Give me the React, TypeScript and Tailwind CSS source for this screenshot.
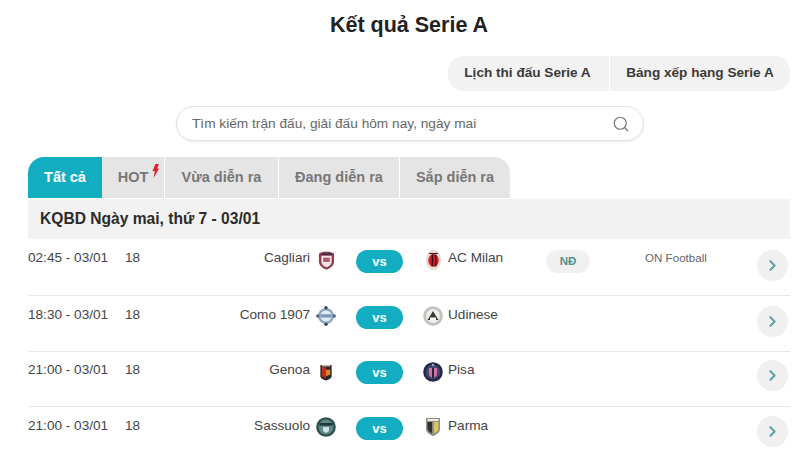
import React from 'react';
import { Search, ChevronRight } from 'lucide-react';

function Cagliari() {
  return (
    <svg viewBox="0 0 18 20" className="h-[19px] w-[17px] blur-[0.3px]">
      <path d="M1 2.5 L5.5 0.8 H12.5 L17 2.5 L17 11 C17 15.5 12.5 18.6 9 19.6 C5.5 18.6 1 15.5 1 11 Z" fill="#8f3a4f" />
      <path d="M3.5 5 H14.5 V11 C14.5 14 11.5 16.4 9 17.2 C6.5 16.4 3.5 14 3.5 11 Z" fill="#f3e3e6" />
      <rect x="5.5" y="7" width="7" height="4.5" fill="#b9566b" />
      <rect x="3.5" y="2.3" width="11" height="1.8" fill="#2c3550" />
    </svg>
  );
}

function Milan() {
  return (
    <svg viewBox="0 0 16 22" className="h-[20px] w-[15px] blur-[0.3px]">
      <ellipse cx="8" cy="11" rx="7.5" ry="10.5" fill="#f1e6e0" stroke="#c9a9a0" strokeWidth="0.6" />
      <ellipse cx="8" cy="11.5" rx="5.8" ry="7" fill="#d81f26" />
      <rect x="6" y="5" width="1.6" height="13" fill="#2a1214" />
      <rect x="9.6" y="5" width="1.6" height="13" fill="#2a1214" />
      <rect x="3" y="3.2" width="10" height="1.2" fill="#3d2022" />
    </svg>
  );
}

function Como() {
  return (
    <svg viewBox="0 0 20 20" className="h-[20px] w-[20px] blur-[0.3px]">
      <circle cx="10" cy="10" r="8" fill="#8fa9c4" />
      <circle cx="10" cy="10" r="5.6" fill="#e4ebf2" />
      <rect x="4.5" y="8.2" width="11" height="3.4" fill="#7f9cb9" />
      <circle cx="10" cy="1.8" r="1.7" fill="#33465c" />
      <circle cx="10" cy="18.2" r="1.7" fill="#33465c" />
      <circle cx="1.8" cy="10" r="1.7" fill="#4b6380" />
      <circle cx="18.2" cy="10" r="1.7" fill="#4b6380" />
    </svg>
  );
}

function Udinese() {
  return (
    <svg viewBox="0 0 20 20" className="h-[20px] w-[20px] blur-[0.3px]">
      <circle cx="10" cy="10" r="9.8" fill="#c4c2bd" />
      <circle cx="10" cy="10" r="7" fill="#eeece8" />
      <path d="M4.5 14 L10 5 L15.5 14 Z" fill="#3a3a3a" />
      <rect x="7" y="11.5" width="6" height="3" fill="#faf9f6" />
    </svg>
  );
}

function Genoa() {
  return (
    <svg viewBox="0 0 14 18" className="h-[17px] w-[14px] blur-[0.3px]">
      <path d="M1 1 H13 V13 C13 15.5 9 17 7 17.5 C5 17 1 15.5 1 13 Z" fill="#2d2a26" />
      <path d="M2.5 3.5 H7 V15 L2.5 13 Z" fill="#c7281f" />
      <path d="M7 6 H11.5 V11 L7 13 Z" fill="#d9852a" />
      <rect x="2.5" y="1" width="9" height="1.6" fill="#c7b9a8" />
    </svg>
  );
}

function Pisa() {
  return (
    <svg viewBox="0 0 20 20" className="h-[20px] w-[20px] blur-[0.3px]">
      <circle cx="10" cy="10" r="9.8" fill="#252a4a" />
      <circle cx="10" cy="10" r="7.2" fill="#43486e" />
      <path d="M6 6 H14 V12 C14 14 11.5 15.5 10 16 C8.5 15.5 6 14 6 12 Z" fill="#d9709f" />
      <rect x="9" y="6" width="2" height="10" fill="#1f2340" />
      <circle cx="10" cy="3" r="0.9" fill="#d6d8e6" />
    </svg>
  );
}

function Sassuolo() {
  return (
    <svg viewBox="0 0 20 20" className="h-[20px] w-[20px] blur-[0.3px]">
      <circle cx="10" cy="10" r="9.8" fill="#33504f" />
      <circle cx="10" cy="10" r="7.4" fill="#5f8a8c" />
      <rect x="3.5" y="6" width="13" height="2.6" fill="#20373a" />
      <path d="M7 10 H13 V14 L10 16 L7 14 Z" fill="#cfe0e0" />
    </svg>
  );
}

function Parma() {
  return (
    <svg viewBox="0 0 16 20" className="h-[20px] w-[16px] blur-[0.3px]">
      <path d="M1 1 H15 V12 C15 16 10 18.5 8 19 C6 18.5 1 16 1 12 Z" fill="#8f8f86" />
      <path d="M2.5 5 H7 V16.4 C5 15.4 2.5 14 2.5 11.5 Z" fill="#2f2f2f" />
      <path d="M9 5 H13.5 V11.5 C13.5 14 11 15.4 9 16.4 Z" fill="#d9c860" />
      <rect x="2.5" y="2" width="11" height="2" fill="#efeee6" />
    </svg>
  );
}

function Hot() {
  return (
    <svg viewBox="0 0 8 14" className="absolute -top-[3px] -right-[11px] h-[14px] w-[8px]">
      <path d="M4.5 0 H8 L6.2 4.6 H8 L2.6 14 L3.8 7 H1.4 Z" fill="#e0222a" />
    </svg>
  );
}

type Match = {
  time: string;
  home: string;
  away: string;
  homeLogo: React.ReactNode;
  awayLogo: React.ReactNode;
  nd?: boolean;
  channel?: string;
  row: string;
  text: string;
  logo: string;
  pill: string;
  arrow: string;
};

const matches: Match[] = [
  { time: '02:45 - 03/01', home: 'Cagliari', away: 'AC Milan', homeLogo: <Cagliari />, awayLogo: <Milan />, nd: true, channel: 'ON Football', row: 'h-[57px]', text: 'pt-[11px]', logo: 'mt-0', pill: 'mt-[11px]', arrow: 'mt-[11px]' },
  { time: '18:30 - 03/01', home: 'Como 1907', away: 'Udinese', homeLogo: <Como />, awayLogo: <Udinese />, row: 'h-[56px]', text: 'pt-[11px]', logo: '-mt-[1px]', pill: 'mt-[10px]', arrow: 'mt-[10px]' },
  { time: '21:00 - 03/01', home: 'Genoa', away: 'Pisa', homeLogo: <Genoa />, awayLogo: <Pisa />, row: 'h-[55px]', text: 'pt-[10px]', logo: 'mt-0', pill: 'mt-[9px]', arrow: 'mt-[8px]' },
  { time: '21:00 - 03/01', home: 'Sassuolo', away: 'Parma', homeLogo: <Sassuolo />, awayLogo: <Parma />, row: 'h-[43px]', text: 'pt-[11px]', logo: '-mt-[1px]', pill: 'mt-[10px]', arrow: 'mt-[9px]' },
];

const tabs = ['Vừa diễn ra', 'Đang diễn ra', 'Sắp diễn ra'];
const tabWidths = ['w-[114px]', 'w-[121px]', 'w-[110px]'];

export default function App() {
  return (
    <div className="h-[450px] w-[800px] overflow-hidden bg-white pr-[10px] pl-[28px] font-['Liberation_Sans',Arial,sans-serif] text-[#333]">
      <h1 className="h-[56px] pt-[12px] text-center text-[21.5px] leading-[26px] font-bold text-[#222]">Kết quả Serie A</h1>

      <div className="flex justify-end">
        <div className="flex h-[35px] rounded-[15px] bg-[#f2f2f2] text-[13.6px] font-bold text-[#3a3a3a]">
          <div className="flex w-[162px] items-center justify-center border-r border-white pr-[2px]">Lịch thi đấu Serie A</div>
          <div className="flex w-[180px] items-center justify-center">Bảng xếp hạng Serie A</div>
        </div>
      </div>

      <div className="mt-[15px] ml-[148px] flex h-[35px] w-[468px] items-center justify-between rounded-full border border-[#e2e2e2] bg-white pr-[13px] pl-[15px] shadow-[0_1px_2px_rgba(0,0,0,0.08)]">
        <span className="pt-[1px] text-[13.7px] text-[#666]">Tìm kiếm trận đấu, giải đấu hôm nay, ngày mai</span>
        <Search className="h-[18px] w-[18px] text-[#777]" strokeWidth={1.6} />
      </div>

      <div className="mt-[16px] flex h-[41px] text-[14.5px] font-bold">
        <div className="flex w-[74px] items-center justify-center rounded-tl-[16px] bg-[#12adc1] text-white">Tất cả</div>
        <div className="flex w-[63px] items-center justify-center border-r border-white bg-[#e5e5e5] text-[#777]">
          <span className="relative">
            HOT
            <Hot />
          </span>
        </div>
        {tabs.map((t, i) => (
          <div
            key={t}
            className={`flex items-center justify-center bg-[#e5e5e5] text-[#777] ${tabWidths[i]} ${i < 2 ? 'border-r border-white' : 'rounded-tr-[16px]'}`}
          >
            {t}
          </div>
        ))}
      </div>

      <div className="mt-px flex h-[40px] items-center bg-[#f2f2f2] pl-[12px] text-[15.6px] font-bold text-[#2b2b2b]">KQBD Ngày mai, thứ 7 - 03/01</div>

      {matches.map((m, i) => (
        <div key={m.home} className={`flex items-start ${m.row} ${i < 3 ? 'border-b border-[#e8e8e8]' : ''}`}>
          <div className={`flex items-start ${m.text} text-[13.6px] leading-[16px] text-[#444]`}>
            <span className="w-[97px]">{m.time}</span>
            <span className="w-[30px]">18</span>
            <span className="w-[155px] text-right">{m.home}</span>
            <span className={`${m.logo} flex h-[20px] w-[31px] items-center justify-center pl-[1px]`}>{m.homeLogo}</span>
          </div>
          <div className={`${m.pill} ml-[15px] flex h-[23px] w-[47px] items-center justify-center rounded-full bg-[#12adc1] text-[13px] font-bold text-white`}>vs</div>
          <div className={`ml-[20px] flex items-start ${m.text} text-[13.6px] leading-[16px] text-[#444]`}>
            <span className={`${m.logo} flex h-[20px] w-[20px] items-center justify-center`}>{m.awayLogo}</span>
            <span className="ml-[5px] w-[98px]">{m.away}</span>
          </div>
          <div className={`${m.pill} flex w-[44px] shrink-0`}>
            {m.nd && <div className="flex h-[23px] w-[44px] items-center justify-center rounded-full bg-[#f0f0f0] text-[11.5px] font-bold text-[#4f8f92]">NĐ</div>}
          </div>
          <div className={`${m.pill} w-[167px] shrink-0 pl-[55px] text-[11.6px] leading-[16px] text-[#666]`}>{m.channel}</div>
          <div className={`${m.arrow} flex h-[31px] w-[31px] shrink-0 items-center justify-center rounded-full bg-[#f0f0f0]`}>
            <ChevronRight className="h-[17px] w-[17px] text-[#5fa3a8]" strokeWidth={3} />
          </div>
        </div>
      ))}
    </div>
  );
}
